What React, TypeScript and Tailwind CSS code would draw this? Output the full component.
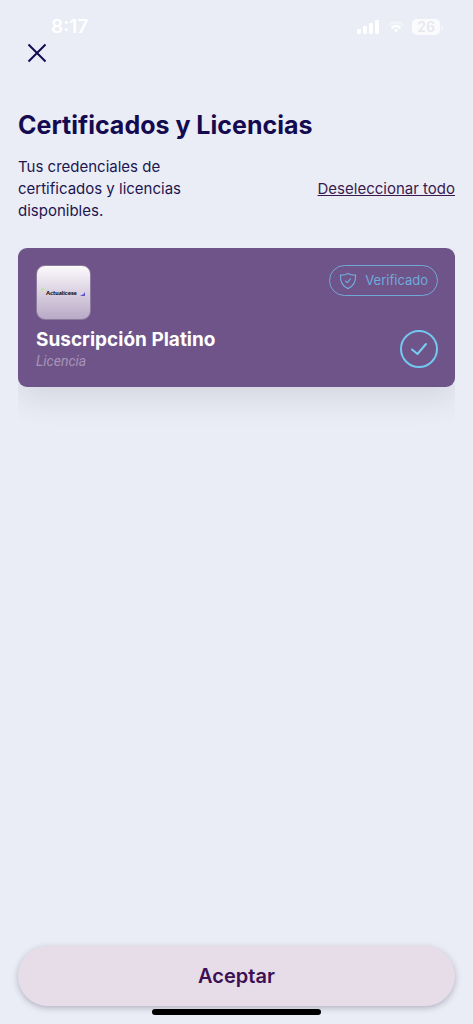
import React, { useState } from 'react';

const StatusBar: React.FC = () => (
  <div className="flex h-10 items-start justify-between pl-[51px] pr-[30px] pt-4 text-white">
    <span className="text-[19px] leading-[22px] font-semibold">8:17</span>
    <div className="flex h-[22px] items-center gap-2">
      <svg width="24" height="16" viewBox="0 0 24 16" fill="currentColor" aria-hidden="true">
        <rect x="1" y="10" width="4" height="5" rx="1" />
        <rect x="7" y="7" width="4" height="8" rx="1" />
        <rect x="13" y="4" width="4" height="11" rx="1" />
        <rect x="19" y="1" width="4" height="14" rx="1" />
      </svg>
      <svg width="16" height="12" viewBox="0 0 16 12" fill="none" stroke="currentColor" strokeWidth="2.4" aria-hidden="true">
        <path d="M1 4.2C5 0.4 11 0.4 15 4.2" opacity="0.4" />
        <path d="M3.4 7C6.2 4.5 9.8 4.5 12.6 7" />
        <path d="M5.6 8.8C7 7.6 9 7.6 10.4 8.8L8 11.4Z" fill="currentColor" stroke="none" />
      </svg>
      <div className="flex items-center gap-px">
        <span className="flex h-4 w-7 items-center justify-center rounded-[5px] bg-white/80 text-[14px] leading-4 font-semibold text-[#e6e8f0]">
          26
        </span>
        <span className="h-[5px] w-[2px] rounded-r bg-white/50" />
      </div>
    </div>
  </div>
);

const ActualiceseLogo: React.FC = () => (
  <div className="flex h-[55px] w-[55px] items-center justify-center rounded-[9px] border border-[#8c7a9f] bg-linear-to-b from-[#fcfafc] to-[#b9a9c6]">
    <svg width="53" height="53" viewBox="0 0 53 53" role="img" aria-label="Actualícese">
      <path d="M4 22.5h4.5l-2.5 1.5l-1 2z" fill="#b5ea8c" />
      <text
        x="9"
        y="29"
        fontSize="6"
        fontWeight="900"
        fontFamily="Lato, 'Open Sans', sans-serif"
        fill="#0b0710"
      >
        Actualícese
      </text>
      <path d="M43 30h5v-4l-1.5 2z" fill="#5b55d6" />
    </svg>
  </div>
);

const VerifiedBadge: React.FC = () => (
  <span className="flex h-[31px] items-center gap-2 rounded-full border border-[#6fa9d8] px-[9px] text-[#70aadb]">
    <svg
      width="18"
      height="18"
      viewBox="0 0 18 18"
      fill="none"
      stroke="currentColor"
      strokeWidth="1.2"
      strokeLinecap="round"
      strokeLinejoin="round"
      aria-hidden="true"
    >
      <path d="M9 1.4C6.8 2.8 4.2 3.2 1.4 3.1C1.2 9 3 14.2 9 16.6C15 14.2 16.8 9 16.6 3.1C13.8 3.2 11.2 2.8 9 1.4Z" />
      <path d="M6.6 9.2L8.4 10.6L11.4 6.8" />
    </svg>
    <span className="pb-[2px] text-[13px] leading-[18px]">Verificado</span>
  </span>
);

interface CredentialCardProps {
  title: string;
  kind: string;
  selected: boolean;
  onChange: (selected: boolean) => void;
}

const CredentialCard: React.FC<CredentialCardProps> = ({ title, kind, selected, onChange }) => (
  <li className="rounded-[9px] bg-[#6f5489] py-[17px] pr-[17px] pl-[18px] shadow-[0_12px_30px_rgba(60,50,70,0.12)]">
    <div className="flex items-start justify-between">
      <ActualiceseLogo />
      <VerifiedBadge />
    </div>
    <div className="mt-2 flex items-center justify-between">
      <div>
        <h2 className="text-[19px] leading-6 font-bold text-white">{title}</h2>
        <p className="font-['Roboto',sans-serif] text-[14px] leading-[18px] text-[#a594b7] italic">{kind}</p>
      </div>
      <div className="grid place-items-center">
        <input
          type="checkbox"
          aria-label={title}
          checked={selected}
          onChange={(e) => onChange(e.target.checked)}
          className="col-start-1 row-start-1 h-[38px] w-[38px] cursor-pointer appearance-none rounded-full border-2 border-[#72c8ef]"
        />
        {selected && (
          <svg
            className="pointer-events-none col-start-1 row-start-1 text-[#78cdf2]"
            width="18"
            height="14"
            viewBox="0 0 18 14"
            fill="none"
            stroke="currentColor"
            strokeWidth="2"
            strokeLinecap="round"
            strokeLinejoin="round"
            aria-hidden="true"
          >
            <path d="M2 7.5L7.5 12L16 2" />
          </svg>
        )}
      </div>
    </div>
  </li>
);

const App: React.FC = () => {
  const [selected, setSelected] = useState(true);

  return (
    <div className="flex min-h-screen flex-col bg-[#eaedf6] font-['Inter',sans-serif]">
      <StatusBar />

      <main className="flex flex-1 flex-col px-[18px]">
        <button type="button" aria-label="Cerrar" className="ml-[7px] flex h-6 w-6 items-center justify-center self-start text-[#140a50]">
          <svg width="24" height="24" viewBox="0 0 24 24" fill="none" stroke="currentColor" strokeWidth="2" aria-hidden="true">
            <path d="M3.5 4.5L20.5 21.5M20.5 4.5L3.5 21.5" />
          </svg>
        </button>

        <h1 className="mt-[45px] text-[25px] leading-8 font-bold text-[#140a50]">Certificados y Licencias</h1>

        <div className="mt-[15px] flex items-center justify-between">
          <p className="w-44 text-[15px] leading-[22px] text-[#1d1550]">
            Tus credenciales de certificados y licencias disponibles.
          </p>
          <button
            type="button"
            onClick={() => setSelected(!selected)}
            className="cursor-pointer text-[15px] leading-[22px] text-[#3a1a4e] underline"
          >
            {selected ? 'Deseleccionar todo' : 'Seleccionar todo'}
          </button>
        </div>

        <ul className="mt-[26px] overflow-hidden pb-11">
          <CredentialCard title="Suscripción Platino" kind="Licencia" selected={selected} onChange={setSelected} />
        </ul>
      </main>

      <footer className="flex flex-col items-center px-[18px] pb-[9px]">
        <button
          type="button"
          className="h-[60px] w-full cursor-pointer rounded-full bg-[#e6dde9] text-[20px] leading-6 font-semibold text-[#3c1053] shadow-[0_2px_6px_rgba(50,40,70,0.3)]"
        >
          Aceptar
        </button>
        <div className="mt-[3px] h-[6px] w-[169px] rounded-full bg-black" />
      </footer>
    </div>
  );
};

export default App;
